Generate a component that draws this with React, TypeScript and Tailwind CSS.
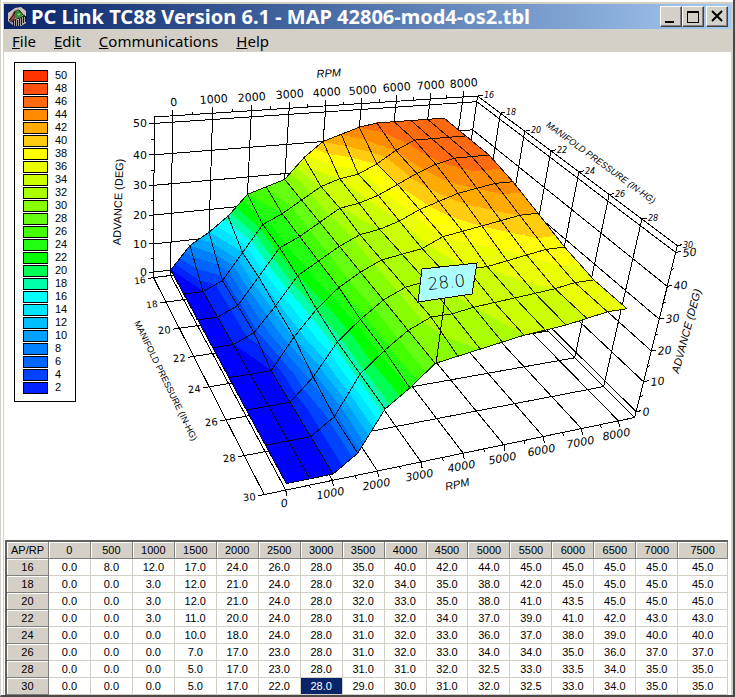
import React from "react";

const RPM = [0, 500, 1000, 1500, 2000, 2500, 3000, 3500, 4000, 4500, 5000, 5500, 6000, 6500, 7000, 7500];
const PRESSURE = [16, 18, 20, 22, 24, 26, 28, 30];

const ADVANCE = [
  [0, 8, 12, 17, 24, 26, 28, 35, 40, 42, 44, 45, 45, 45, 45, 45],
  [0, 0, 3, 12, 21, 24, 28, 32, 34, 35, 38, 42, 45, 45, 45, 45],
  [0, 0, 3, 12, 21, 24, 28, 32, 33, 35, 38, 41, 43.5, 45, 45, 45],
  [0, 0, 3, 11, 20, 24, 28, 31, 32, 34, 37, 39, 41, 42, 43, 43],
  [0, 0, 0, 10, 18, 24, 28, 31, 32, 33, 36, 37, 38, 39, 40, 40],
  [0, 0, 0, 7, 17, 23, 28, 31, 32, 33, 34, 34, 35, 36, 37, 37],
  [0, 0, 0, 5, 17, 23, 28, 31, 31, 32, 32.5, 33, 33.5, 34, 35, 35],
  [0, 0, 0, 5, 17, 22, 28, 29, 30, 31, 32, 32.5, 33, 34, 35, 35],
];

const SELECTED = { row: 7, col: 6 };

// index 0 is the base colour, index n is the band that ends at 2n degrees
const BANDS = [
  "#0000ff", "#0022ff", "#0044ff", "#0066ff", "#0080ff", "#00a0ff", "#00bfff",
  "#00e5ff", "#00ffff", "#00ffaa", "#00ff55", "#00ff00", "#22ff11", "#44ff00",
  "#66ff11", "#88ff00", "#aaff00", "#ccff00", "#eaff00", "#ffff00", "#ffcc10",
  "#ffaa00", "#ff8c00", "#ff6a10", "#ff5010", "#ff3300",
];

type Vec = [number, number, number];

const R_MIN = -0.45;
const R_MAX = 8.45;
const Z_MIN = -2;
const Z_MAX = 52;

// r: rpm / 1000, p: manifold pressure, z: advance
const project = ([r, p, z]: Vec): [number, number] => {
  const q = p - 16;
  const w = 1 + 0.0136 * r - 0.0171 * q - 0.0013 * z;
  const x = 170.7 + 40.15 * r + 3.36 * q - 0.187 * z;
  const y = 270 - 0.88 * r + 6.99 * q - 3.115 * z;
  return [x / w, y / w];
};

const toPoints = (pts: Vec[]) =>
  pts.map((v) => project(v).map((n) => n.toFixed(1)).join(",")).join(" ");

// Keep the part of a polygon above (sign = 1) or below (sign = -1) a level
const clip = (poly: Vec[], level: number, sign: number): Vec[] => {
  const out: Vec[] = [];
  poly.forEach((a, i) => {
    const b = poly[(i + 1) % poly.length];
    const da = (a[2] - level) * sign;
    const db = (b[2] - level) * sign;
    if (da >= 0) out.push(a);
    if ((da > 0 && db < 0) || (da < 0 && db > 0)) {
      const t = da / (da - db);
      out.push([a[0] + t * (b[0] - a[0]), a[1] + t * (b[1] - a[1]), level]);
    }
  });
  return out;
};

const vertex = (row: number, col: number): Vec => [RPM[col] / 1000, PRESSURE[row], ADVANCE[row][col]];

const buildSurface = () => {
  const faces: { points: string; color: string }[] = [];
  for (let row = 0; row < PRESSURE.length - 1; row++) {
    for (let col = 0; col < RPM.length - 1; col++) {
      const a = vertex(row, col);
      const b = vertex(row, col + 1);
      const c = vertex(row + 1, col + 1);
      const d = vertex(row + 1, col);
      [[a, b, c], [a, c, d]].forEach((tri) => {
        const lo = Math.min(...tri.map((v) => v[2]));
        const hi = Math.max(...tri.map((v) => v[2]));
        if (lo === hi) {
          faces.push({ points: toPoints(tri), color: BANDS[Math.ceil(lo / 2)] });
          return;
        }
        for (let k = Math.floor(lo / 2) + 1; k <= Math.ceil(hi / 2); k++) {
          const part = clip(clip(tri, (k - 1) * 2, 1), k * 2, -1);
          if (part.length > 2) faces.push({ points: toPoints(part), color: BANDS[k] });
        }
      });
    }
  }
  return faces;
};

const SURFACE = buildSurface();

const MESH = [
  ...PRESSURE.map((_, row) => toPoints(RPM.map((_, col) => vertex(row, col)))),
  ...RPM.map((_, col) => toPoints(PRESSURE.map((_, row) => vertex(row, col)))),
];

const R_TICKS = [0, 1, 2, 3, 4, 5, 6, 7, 8];
const R_MINOR = [0.5, 1.5, 2.5, 3.5, 4.5, 5.5, 6.5, 7.5];
const Z_TICKS = [0, 10, 20, 30, 40, 50];
const Z_MINOR = [5, 15, 25, 35, 45];

const GRID = [
  // box outline
  toPoints([[R_MIN, 16, Z_MIN], [R_MIN, 16, Z_MAX], [R_MAX, 16, Z_MAX], [R_MAX, 30, Z_MAX], [R_MAX, 30, Z_MIN], [R_MIN, 30, Z_MIN], [R_MIN, 16, Z_MIN], [R_MAX, 16, Z_MIN], [R_MAX, 30, Z_MIN]]),
  toPoints([[R_MAX, 16, Z_MIN], [R_MAX, 16, Z_MAX]]),
  ...R_TICKS.map((r) => toPoints([[r, 30, Z_MIN], [r, 16, Z_MIN], [r, 16, Z_MAX]])),
  ...Z_TICKS.map((z) => toPoints([[R_MIN, 16, z], [R_MAX, 16, z], [R_MAX, 30, z]])),
  ...PRESSURE.slice(1, -1).map((p) => toPoints([[R_MIN, p, Z_MIN], [R_MAX, p, Z_MIN], [R_MAX, p, Z_MAX]])),
];

const Tick = ({ at, dx, dy }: { at: Vec; dx: number; dy: number }) => {
  const [x, y] = project(at);
  return <line x1={x} y1={y} x2={x + dx} y2={y + dy} />;
};

interface LabelProps {
  at: Vec;
  dx: number;
  dy: number;
  angle?: number;
  anchor?: "start" | "middle" | "end";
  className?: string;
  children: React.ReactNode;
}

const Label = ({ at, dx, dy, angle = 0, anchor = "middle", className = "text-[11px]", children }: LabelProps) => {
  const [x, y] = project(at);
  return (
    <text className={className} textAnchor={anchor} transform={`translate(${Math.round(x + dx)} ${Math.round(y + dy)}) rotate(${angle})`}>
      {children}
    </text>
  );
};

const SurfaceChart = () => (
  <svg viewBox="76 52 655 488" className="block w-full font-['DejaVu_Sans',sans-serif]" role="img" aria-label="Spark advance by RPM and manifold pressure">
    <g fill="none" stroke="#000" shapeRendering="crispEdges">
      {GRID.map((points, i) => (
        <polyline key={i} points={points} />
      ))}
      {R_TICKS.map((r) => (
        <React.Fragment key={r}>
          <Tick at={[r, 16, Z_MAX]} dx={0} dy={-6} />
          <Tick at={[r, 30, Z_MIN]} dx={1} dy={6} />
        </React.Fragment>
      ))}
      {R_MINOR.map((r) => (
        <React.Fragment key={r}>
          <Tick at={[r, 16, Z_MAX]} dx={0} dy={-3} />
          <Tick at={[r, 30, Z_MIN]} dx={1} dy={3} />
        </React.Fragment>
      ))}
      {Z_TICKS.map((z) => (
        <React.Fragment key={z}>
          <Tick at={[R_MIN, 16, z]} dx={-5} dy={0} />
          <Tick at={[R_MAX, 30, z]} dx={5} dy={-1} />
        </React.Fragment>
      ))}
      {Z_MINOR.map((z) => (
        <React.Fragment key={z}>
          <Tick at={[R_MIN, 16, z]} dx={-3} dy={0} />
          <Tick at={[R_MAX, 30, z]} dx={3} dy={-1} />
        </React.Fragment>
      ))}
      {PRESSURE.map((p) => (
        <React.Fragment key={p}>
          <Tick at={[R_MIN, p, Z_MIN]} dx={-6} dy={1} />
          <Tick at={[R_MAX, p, Z_MAX]} dx={5} dy={-1} />
        </React.Fragment>
      ))}
    </g>

    <g shapeRendering="crispEdges">
      {SURFACE.map((f, i) => (
        <polygon key={i} points={f.points} fill={f.color} stroke={f.color} strokeWidth={1} />
      ))}
    </g>
    <g fill="none" stroke="#000" strokeOpacity={0.85} shapeRendering="crispEdges">
      {MESH.map((points, i) => (
        <polyline key={i} points={points} />
      ))}
    </g>

    <g fill="#000">
      {R_TICKS.map((r) => (
        <React.Fragment key={r}>
          <Label at={[r, 16, Z_MAX]} dx={1} dy={-10} angle={-4}>{r * 1000}</Label>
          <Label at={[r, 30, Z_MIN]} dx={-1} dy={17} angle={-10} className="text-[11px] italic">{r * 1000}</Label>
        </React.Fragment>
      ))}
      {Z_TICKS.map((z) => (
        <React.Fragment key={z}>
          <Label at={[R_MIN, 16, z]} dx={-7} dy={4} anchor="end">{z}</Label>
          <Label at={[R_MAX, 30, z]} dx={7} dy={4} angle={-6} anchor="start" className="text-[11px] italic">{z}</Label>
        </React.Fragment>
      ))}
      {PRESSURE.map((p) => (
        <React.Fragment key={p}>
          <Label at={[R_MIN, p, Z_MIN]} dx={-8} dy={5} angle={-6} anchor="end" className={p < 20 ? "text-[9px]" : "text-[10px]"}>{p}</Label>
          <Label at={[R_MAX, p, Z_MAX]} dx={6} dy={2} anchor="start" className="text-[8px] italic">{p}</Label>
        </React.Fragment>
      ))}
    </g>

    <g fill="#000" textAnchor="middle" className="font-['Liberation_Sans',Arial,sans-serif] text-[11px]">
      <text transform="translate(329 77) rotate(-4)" className="italic">RPM</text>
      <text transform="translate(458 488) rotate(-12)" className="italic">RPM</text>
      <text transform="translate(122 202) rotate(-88)">ADVANCE (DEG)</text>
      <text transform="translate(690 332) rotate(-75)" className="italic">ADVANCE (DEG)</text>
      <text transform="translate(163 382) rotate(64)" className="text-[9px]">MANIFOLD PRESSURE (IN-HG)</text>
      <text transform="translate(599 165) rotate(36)" className="text-[9px] italic">MANIFOLD PRESSURE (IN-HG)</text>
    </g>

    <g stroke="#000" shapeRendering="crispEdges">
      <line x1="445" y1="298" x2="436" y2="364" />
      <polygon points="422,269 477,263 472,294 418,302" fill="#aaffff" />
    </g>
    <text transform="translate(447 288) rotate(-6)" textAnchor="middle" className="text-[17px] font-extralight">28.0</text>
  </svg>
);

const Legend = () => (
  <ul className="mt-[10px] ml-[10px] shrink-0 border border-black px-[8px] pt-[6px] pb-[7px]">
    {BANDS.slice(1).map((color, i) => (
      <li key={color} className="flex h-[13px] items-center gap-[7px] text-[11px] leading-[13px]">
        <span className="h-[12px] w-[25px] border border-black" style={{ backgroundColor: color }} />
        <span className="w-[12px]">{(i + 1) * 2}</span>
      </li>
    )).reverse()}
  </ul>
);

const AppIcon = () => (
  <svg viewBox="0 0 20 20" className="h-5 w-5 shrink-0" aria-hidden="true">
    <path d="M1 6 L8 1 L14 0 L19 4 L19 16 L14 19 L7 19 L1 14 Z" fill="#c9c4bb" />
    <path d="M2 14 L7 4 L12 2 L9 10 L5 16 Z" fill="#6b3f35" />
    <path d="M3 10 L8 6 L6 12 Z" fill="#d4574a" />
    <path d="M8 5 L12 3 L16 8 L12 11 L8 11 Z" fill="#2f8a3c" />
    <path d="M10 7 L14 6 L12 9 Z" fill="#8fd46a" />
    <path d="M12 3 L18 10 L20 10 M2 13 L6 9 L8 5" fill="none" stroke="#111" />
    <path d="M6.5 13 V19 M8.5 12 V19 M10.5 13 V19 M12.5 11 V19 M14.5 10 V18 M16.5 9 V16 M18.5 9 V15" stroke="#15120f" strokeWidth="1.2" />
    <path d="M5 15 L9 12 L13 11 L18 8" fill="none" stroke="#2b2622" />
  </svg>
);

const CaptionButton = ({ label, children }: { label: string; children: React.ReactNode }) => (
  <button
    type="button"
    aria-label={label}
    className="h-[21px] w-[22px] border border-t-white border-r-[#404040] border-b-[#404040] border-l-white bg-[#d4d0c8] shadow-[inset_-1px_-1px_0_#808080]"
  >
    <svg viewBox="0 0 20 19" className="block h-full w-full" fill="none" stroke="#000" shapeRendering="crispEdges" aria-hidden="true">
      {children}
    </svg>
  </button>
);

const TitleBar = () => (
  <header className="flex h-[25px] items-center bg-linear-to-r from-[#0a246a] to-[#a6caf0] px-[3px]">
    <AppIcon />
    <h1 className="ml-[4px] flex-1 truncate font-['Noto_Sans',sans-serif] text-[20px] leading-[25px] font-bold text-white">
      PC Link TC88 Version 6.1 - MAP 42806-mod4-os2.tbl
    </h1>
    <CaptionButton label="Minimize">
      <path d="M4 15 H13" strokeWidth="2" />
    </CaptionButton>
    <CaptionButton label="Maximize">
      <path d="M4 5 H16" strokeWidth="2" />
      <path d="M4.5 4 V15.5 H15.5 V4" />
    </CaptionButton>
    <div className="ml-[2px] flex">
      <CaptionButton label="Close">
        <path d="M5 4 L15 14 M15 4 L5 14" strokeWidth="2" shapeRendering="auto" />
      </CaptionButton>
    </div>
  </header>
);

const MENUS = ["File", "Edit", "Communications", "Help"];

const MenuBar = () => (
  <nav className="flex h-[23px] items-center gap-[18px] bg-[#d4d0c8] pl-[8px] font-['Noto_Sans',sans-serif] text-[15px] leading-[22px]">
    {MENUS.map((name) => (
      <button key={name} type="button">
        <span className="underline">{name[0]}</span>
        {name.slice(1)}
      </button>
    ))}
  </nav>
);

const HEAD = "h-[17px] border-r border-b border-[#808080] bg-[#d4d0c8] p-0 text-center font-normal shadow-[inset_1px_1px_0_#fff]";

const AdvanceTable = () => (
  <table className="ml-px w-[calc(100%-4px)] table-fixed border-separate border-spacing-0 border-t-2 border-l-2 border-[#606060] text-[11px] leading-[16px]">
    <colgroup>
      {[...PRESSURE, ...PRESSURE].map((_, i) => (
        <col key={i} className="w-[5.82%]" />
      ))}
      <col />
    </colgroup>
    <thead>
      <tr>
        <th className={HEAD} scope="col">AP/RP</th>
        {RPM.map((r) => (
          <th key={r} className={HEAD} scope="col">{r}</th>
        ))}
      </tr>
    </thead>
    <tbody>
      {ADVANCE.map((values, row) => (
        <tr key={row}>
          <th className={HEAD} scope="row">{PRESSURE[row]}</th>
          {values.map((v, col) => (
            <td
              key={col}
              className={`h-[17px] border-r border-b border-[#d0cfc4] p-0 text-center ${
                row === SELECTED.row && col === SELECTED.col ? "bg-[#0a246a] text-white" : "bg-white"
              }`}
            >
              {v.toFixed(1)}
            </td>
          ))}
        </tr>
      ))}
    </tbody>
  </table>
);

export default function App() {
  return (
    <div className="flex min-h-screen flex-col border-r-2 border-b-2 border-l border-r-[#484848] border-b-[#484848] border-l-[#d4d0c8] bg-[#d4d0c8] font-['Liberation_Sans',Arial,sans-serif] text-black">
      <div className="flex flex-1 flex-col border-t-2 border-l-2 border-white pt-[2px] pr-[2px] pl-px">
        <TitleBar />
        <MenuBar />
        <main className="flex flex-1 flex-col bg-white">
          <div className="flex flex-1 items-start">
            <Legend />
            <div className="min-w-0 flex-1">
              <SurfaceChart />
            </div>
          </div>
          <AdvanceTable />
        </main>
      </div>
    </div>
  );
}
